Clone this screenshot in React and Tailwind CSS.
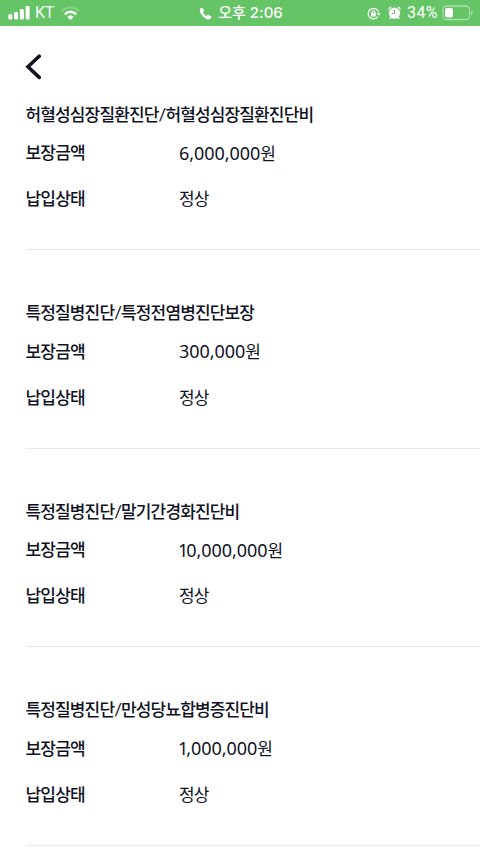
import React from 'react';

const coverages = [
  { title: '허혈성심장질환진단/허혈성심장질환진단비', amount: '6,000,000', status: '정상' },
  { title: '특정질병진단/특정전염병진단보장', amount: '300,000', status: '정상' },
  { title: '특정질병진단/말기간경화진단비', amount: '10,000,000', status: '정상' },
  { title: '특정질병진단/만성당뇨합병증진단비', amount: '1,000,000', status: '정상' },
];

const StatusBar = () => (
  <div className="grid h-[26px] grid-cols-[1fr_auto_1fr] items-center bg-[#64c466] pr-1.5 pl-2 font-['Inter','Noto_Sans_CJK_KR',sans-serif] text-[15px] leading-[26px] text-white">
    <div className="flex items-center">
      <svg width="22" height="14" viewBox="0 0 22 14" fill="currentColor">
        <rect x="0.3" y="8.2" width="4" height="5.3" rx="1.2" />
        <rect x="6.1" y="6" width="4" height="7.5" rx="1.2" />
        <rect x="11.9" y="3" width="4" height="10.5" rx="1.2" />
        <rect x="17.6" y="0" width="4" height="13.5" rx="1.2" />
      </svg>
      <span className="ml-[5px] w-[20px] font-['Roboto',sans-serif] text-[16px] tracking-[-0.3px]">KT</span>
      <svg className="ml-[6px]" width="19" height="14" viewBox="0 0 19 14" fill="none" stroke="currentColor">
        <path d="M1 5.2C5.7.2 13.3.2 18 5.2" strokeWidth="2" opacity=".25" />
        <path d="M3.9 8.3C7.2 4.9 11.8 4.9 15.1 8.3" strokeWidth="2.6" />
        <path d="M6.3 10.8c1.7-1.7 4.7-1.7 6.4 0L9.5 14z" fill="currentColor" stroke="none" />
      </svg>
    </div>
    <div className="flex items-center">
      <svg width="13" height="13" viewBox="0 0 13 13" fill="currentColor">
        <path d="M2.3.8C.3 1.8.2 4 2 6.8c1.7 2.7 4 4.8 6.3 5.5 2 .5 3.300-.5 4-1.800.2-.5 0-.9-.4-1.200L9.700 7.900c-.4-.3-.8-.2-1.100.1L7.500 9C6 8.300 4.600 6.800 4 5.400l.9-1.100c.3-.3.3-.7.1-1.100L3.500 1C3.200.6 2.800.5 2.300.8z" />
      </svg>
      <span className="ml-[6px] font-medium">오후 2:06</span>
    </div>
    <div className="flex items-center justify-end">
      <svg width="14" height="13" viewBox="0 0 14 13" fill="none" stroke="currentColor">
        <path d="M11.6 5.2A5.3 5.3 0 1 0 10.8 9.7" strokeWidth="1.3" />
        <path d="M9.6 6h4.2l-2.1 2.7z" fill="currentColor" stroke="none" />
        <rect x="4" y="5.7" width="4.8" height="3.7" rx=".5" fill="currentColor" stroke="none" />
        <path d="M5 6V4.7a1.4 1.4 0 0 1 2.8 0V6" strokeWidth="1" />
      </svg>
      <svg className="ml-[7px]" width="13" height="14" viewBox="0 0 13 14" fill="currentColor">
        <circle cx="6.5" cy="7.2" r="5.6" />
        <path d="M.5 4.2C0 2 1.5.5 3.9.8zM12.5 4.2C13 2 11.5.5 9.1.8z" />
        <path d="M3 11l-1.2 1.7M10 11l1.2 1.7" stroke="currentColor" strokeWidth="1.5" />
        <path d="M6.5 3.8v3.7H3.8" fill="none" stroke="#64c466" strokeWidth="1" />
      </svg>
      <span className="ml-[6px] w-[32px] font-['Roboto',sans-serif] text-[16px] tracking-[0.4px]">34%</span>
      <svg className="ml-[3px]" width="32" height="16" viewBox="0 0 32 16" fill="none">
        <rect x="1" y="1" width="26.5" height="13.5" rx="3.5" stroke="white" strokeWidth="1.3" opacity=".45" />
        <rect x="3" y="3" width="8" height="9.5" rx="2" fill="white" />
        <path d="M29.2 5.5c1.8.6 1.8 4 0 4.6z" fill="white" opacity=".5" />
      </svg>
    </div>
  </div>
);

const Row = ({ label, children }) => (
  <div className="flex h-[46px] items-center">
    <dt className="w-[153.5px] font-medium tracking-[-0.8px]">{label}</dt>
    <dd className="tracking-[-0.8px]">{children}</dd>
  </div>
);

// A leading "1" sits tighter than the other digits
const Amount = ({ value }) => {
  const narrow = value.startsWith('1');
  return (
    <>
      <span className="font-['Noto_Sans',sans-serif] text-[18px] tracking-[-0.05px]">
        {narrow && <span className="-ml-[1px] tracking-[-2px]">1</span>}
        {narrow ? value.slice(1) : value}
      </span>
      원
    </>
  );
};

const App = () => {
  return (
    <div className="h-[854px] w-[480px] overflow-hidden bg-white font-['Lato','Noto_Sans_CJK_KR',sans-serif] text-[17px] leading-[26px] text-[#10131f]">
      <StatusBar />
      <header className="flex h-[76px] items-start pt-[28px] pl-[25px]">
        <button type="button" aria-label="뒤로">
          <svg width="17" height="26" viewBox="0 0 17 26" fill="none" stroke="currentColor" strokeWidth="3.6" strokeLinecap="round">
            <path d="M14.2 2.2L3 12.8L14.2 23.4" />
          </svg>
        </button>
      </header>
      <main className="-mt-[50px] pl-[25.5px]">
        {coverages.map((item) => (
          <section key={item.title} className="h-[198.4px] border-b border-[#e8e8e8] pt-[50px]">
            <h2 className="font-medium tracking-[-0.86px]">{item.title}</h2>
            <dl className="pt-[2.4px]">
              <Row label="보장금액">
                <Amount value={item.amount} />
              </Row>
              <Row label="납입상태">{item.status}</Row>
            </dl>
          </section>
        ))}
      </main>
    </div>
  );
};

export default App;
